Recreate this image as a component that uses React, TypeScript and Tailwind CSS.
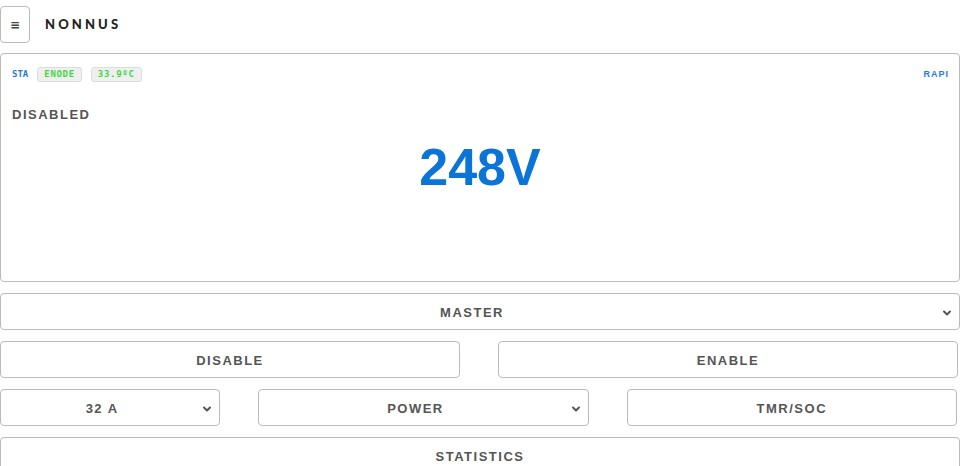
import { ChevronDown } from "lucide-react";

const label = "font-['Liberation_Sans',Arial,sans-serif] font-bold text-[13px] tracking-[1.5px] text-[#555]";

function Select({ value, className }: { value: string; className?: string }) {
  return (
    <div className={`relative h-[37px] border border-[#bbb] rounded-[4px] bg-white flex items-center justify-center pt-[2px] ${className ?? ""}`}>
      <span className={`${label} pr-4`}>{value}</span>
      <ChevronDown size={12} strokeWidth={4} className="absolute right-[6px] top-[13px] text-[#555]" />
    </div>
  );
}

function Btn({ text }: { text: string }) {
  return (
    <button className={`h-[37px] border border-[#bbb] rounded-[4px] bg-white flex items-center justify-center pt-[2px] ${label}`}>
      {text}
    </button>
  );
}

export default function App() {
  return (
    <div className="w-[960px] h-[466px] overflow-hidden bg-white">
      {/* Header */}
      <div className="flex items-center h-[48px] pt-[1px]">
        <button className="w-[30px] h-[37px] border border-[#bbb] rounded-[4px] flex items-center justify-center text-[#444] font-['DejaVu_Sans',sans-serif] text-[12px] font-bold">
          ≡
        </button>
        <span className="ml-[15px] font-['Lato',sans-serif] font-black text-[13px] tracking-[3.1px] text-[#222]">NONNUS</span>
      </div>

      {/* Main card */}
      <div className="mt-[5px] h-[229px] border border-[#bbb] rounded-[4px] px-[11px] pt-[13px] flex flex-col">
        <div className="flex items-center justify-between">
          <div className="flex items-center gap-[8px] font-['DejaVu_Sans_Mono','Liberation_Mono',monospace] text-[9px]">
            <span className="text-[#1e7be6] font-bold">STA</span>
            <span className="h-[15px] px-[6px] ml-[1px] flex items-center bg-[#efefef] border border-[#ddd] rounded-[3px] text-[#3fd83f] font-bold tracking-[0.7px]">ENODE</span>
            <span className="h-[15px] px-[6px] ml-[1px] flex items-center bg-[#efefef] border border-[#ddd] rounded-[3px] text-[#3fd83f] font-bold tracking-[0.7px]">33.9ºC</span>
          </div>
          <span className="font-['Liberation_Sans',Arial,sans-serif] font-bold text-[9px] tracking-[1px] text-[#1e7be6] mr-[-1px]">RAPI</span>
        </div>
        <div className={`mt-[23px] ${label}`}>DISABLED</div>
        <div className="mt-[12px] text-center font-['Liberation_Sans',Arial,sans-serif] font-bold text-[52px] leading-[60px] text-[#0b74d8]">248V</div>
      </div>

      {/* Controls */}
      <div className="mt-[11px] flex flex-col gap-[11px]">
        <Select value="MASTER" />
        <div className="grid grid-cols-2 gap-[38px] pr-[2px]">
          <Btn text="DISABLE" />
          <Btn text="ENABLE" />
        </div>
        <div className="grid grid-cols-[2fr_3fr_3fr] gap-[38px] pr-[3px]">
          <Select value="32 A" />
          <Select value="POWER" />
          <Btn text="TMR/SOC" />
        </div>
        <Btn text="STATISTICS" />
      </div>
    </div>
  );
}
